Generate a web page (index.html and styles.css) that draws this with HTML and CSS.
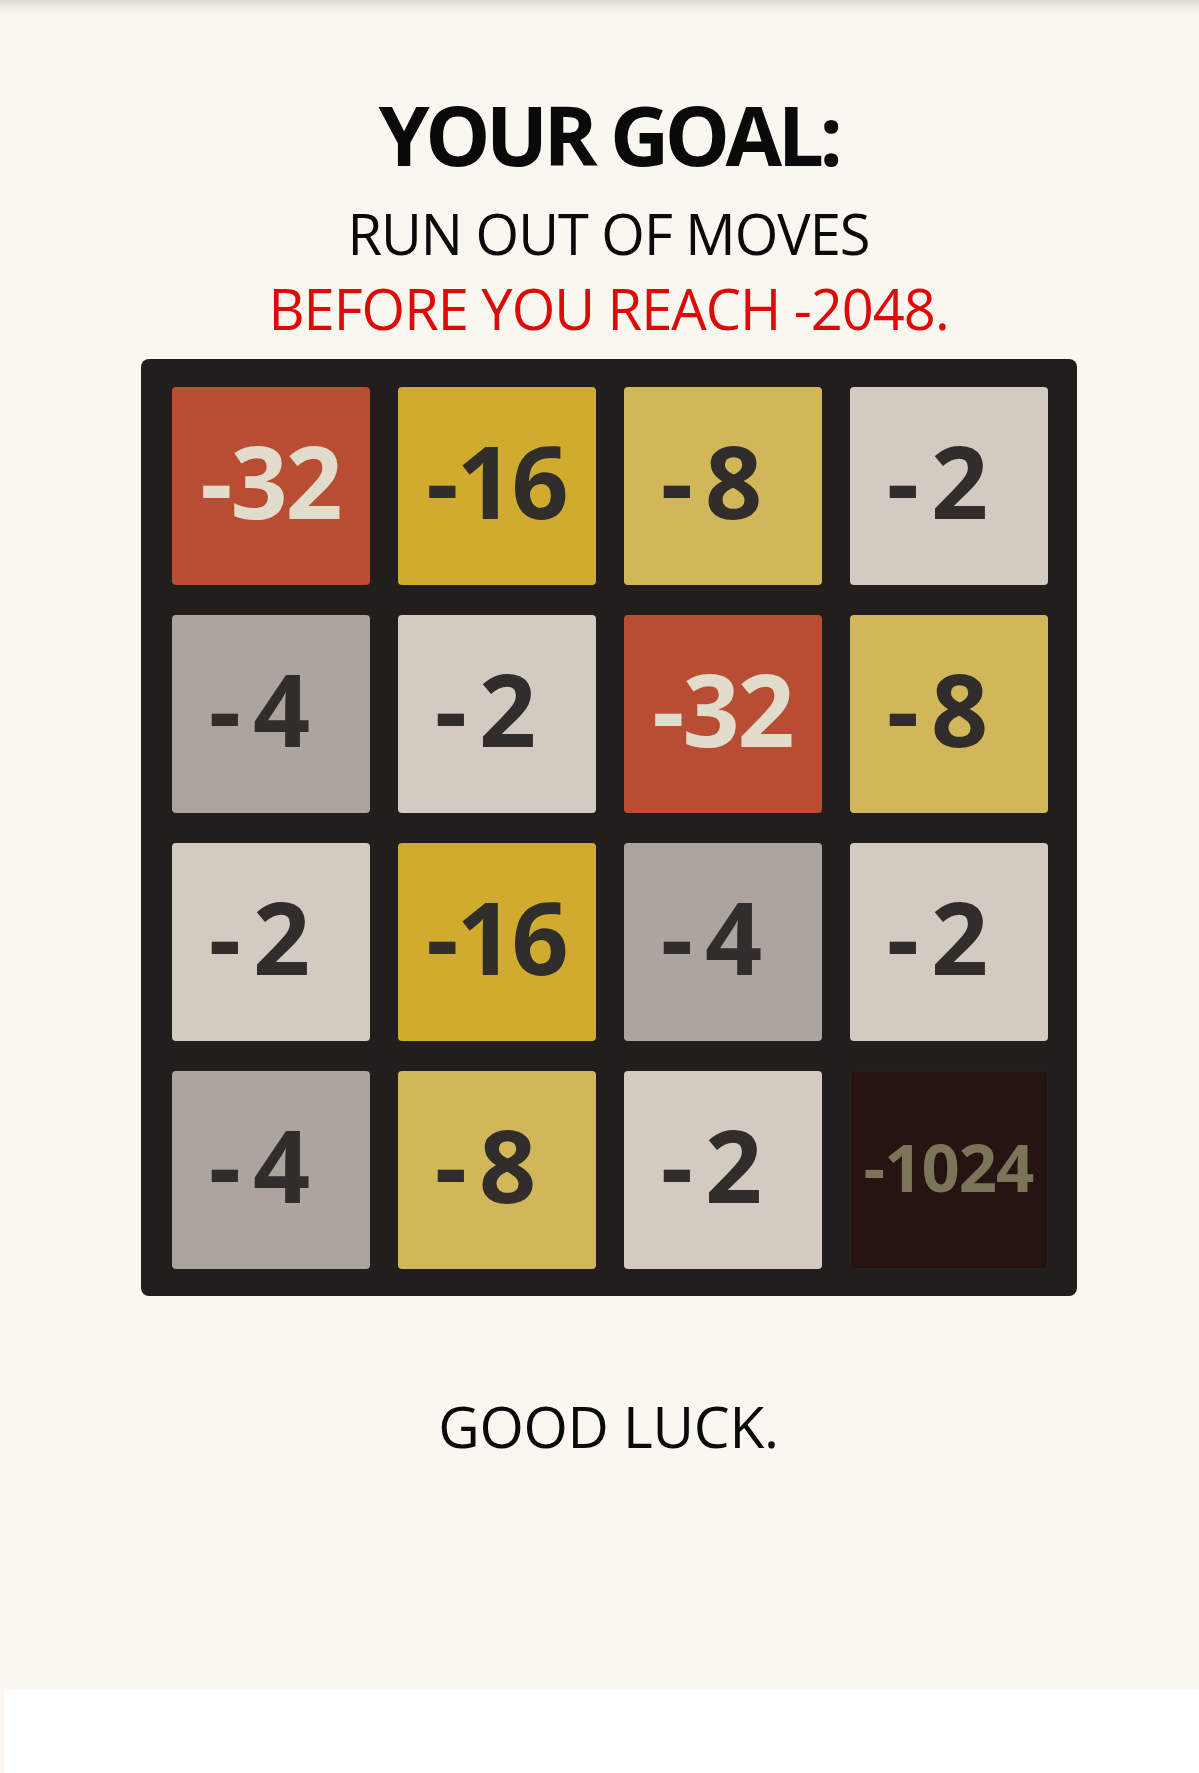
FILE: index.html
```html
<!DOCTYPE html>
<html lang="en">
<head>
<meta charset="utf-8">
<title>Your goal</title>
<link rel="stylesheet" href="styles.css">
</head>
<body>
  <main class="sheet">
    <h1 class="goal-title">YOUR GOAL:</h1>
    <p class="goal-line">RUN OUT OF MOVES</p>
    <p class="goal-line goal-line--warn">BEFORE YOU REACH -2048.</p>

    <div class="board">
      <div class="tile t32">-32</div>
      <div class="tile t16">-16</div>
      <div class="tile t8 short">-<span class="digit">8</span></div>
      <div class="tile t2 short">-<span class="digit">2</span></div>

      <div class="tile t4 short">-<span class="digit">4</span></div>
      <div class="tile t2 short">-<span class="digit">2</span></div>
      <div class="tile t32">-32</div>
      <div class="tile t8 short">-<span class="digit">8</span></div>

      <div class="tile t2 short">-<span class="digit">2</span></div>
      <div class="tile t16">-16</div>
      <div class="tile t4 short">-<span class="digit">4</span></div>
      <div class="tile t2 short">-<span class="digit">2</span></div>

      <div class="tile t4 short">-<span class="digit">4</span></div>
      <div class="tile t8 short">-<span class="digit">8</span></div>
      <div class="tile t2 short">-<span class="digit">2</span></div>
      <div class="tile t1024">-1024</div>
    </div>

    <p class="farewell">GOOD LUCK.</p>
  </main>
  <footer class="page-end"></footer>
</body>
</html>
```

FILE: styles.css
```css
html, body {
  margin: 0;
  padding: 0;
  background: #ffffff;
}

body {
  font-family: "Open Sans", "Noto Sans", "Liberation Sans", sans-serif;
  color: #0a0a0a;
}

.sheet {
  height: 1689px;
  box-sizing: border-box;
  padding: 93px 0 0 18px;
  display: flex;
  flex-direction: column;
  align-items: center;
  background: linear-gradient(to bottom, #dcd9d1 0px, #efece4 6px, #f9f7ef 16px, #f9f7ef 100%);
}

.goal-title {
  margin: 0;
  font-size: 82px;
  line-height: 82px;
  font-weight: 700;
  letter-spacing: -4.5px;
}

.goal-line {
  margin: 30px 0 0;
  font-size: 56px;
  line-height: 56px;
  font-weight: 400;
  letter-spacing: -1px;
}

.goal-line--warn {
  margin-top: 19px;
  color: #dd0a0a;
}

.board {
  margin-top: 23px;
  width: 936px;
  box-sizing: border-box;
  padding: 28px 29px 27px 31px;
  background: #221e1c;
  border-radius: 8px;
  display: grid;
  grid-template-columns: repeat(4, 198px);
  grid-auto-rows: 198px;
  column-gap: 28px;
  row-gap: 30px;
}

.tile {
  box-sizing: border-box;
  padding-bottom: 12px;
  border-radius: 4px;
  display: flex;
  align-items: center;
  justify-content: center;
  font-family: "Open Sans", "Noto Sans", sans-serif;
  font-weight: 700;
  font-size: 100px;
  line-height: 1;
  color: #312d2b;
  letter-spacing: -2px;
}

.tile.short {
  padding-right: 24px;
}

.tile .digit {
  margin-left: 14px;
}

.t2 { background: #d3cac1; }
.t4 { background: #aca49f; }
.t8 { background: #d1b65a; }
.t16 { background: #d0ac2e; }
.t32 { background: #b84d34; color: #e1dccb; }
.t1024 {
  background: #251412;
  box-shadow: inset 0 0 0 1px #2c1f1b;
  color: #7c7459;
  font-size: 67px;
  letter-spacing: -1px;
  padding-bottom: 8px;
}

.farewell {
  margin: 102px 0 0;
  font-size: 57px;
  line-height: 57px;
  font-weight: 400;
  letter-spacing: -0.3px;
}

.page-end {
  height: 84px;
  background: #ffffff;
  border-left: 4px solid #f9f7ef;
}
```
